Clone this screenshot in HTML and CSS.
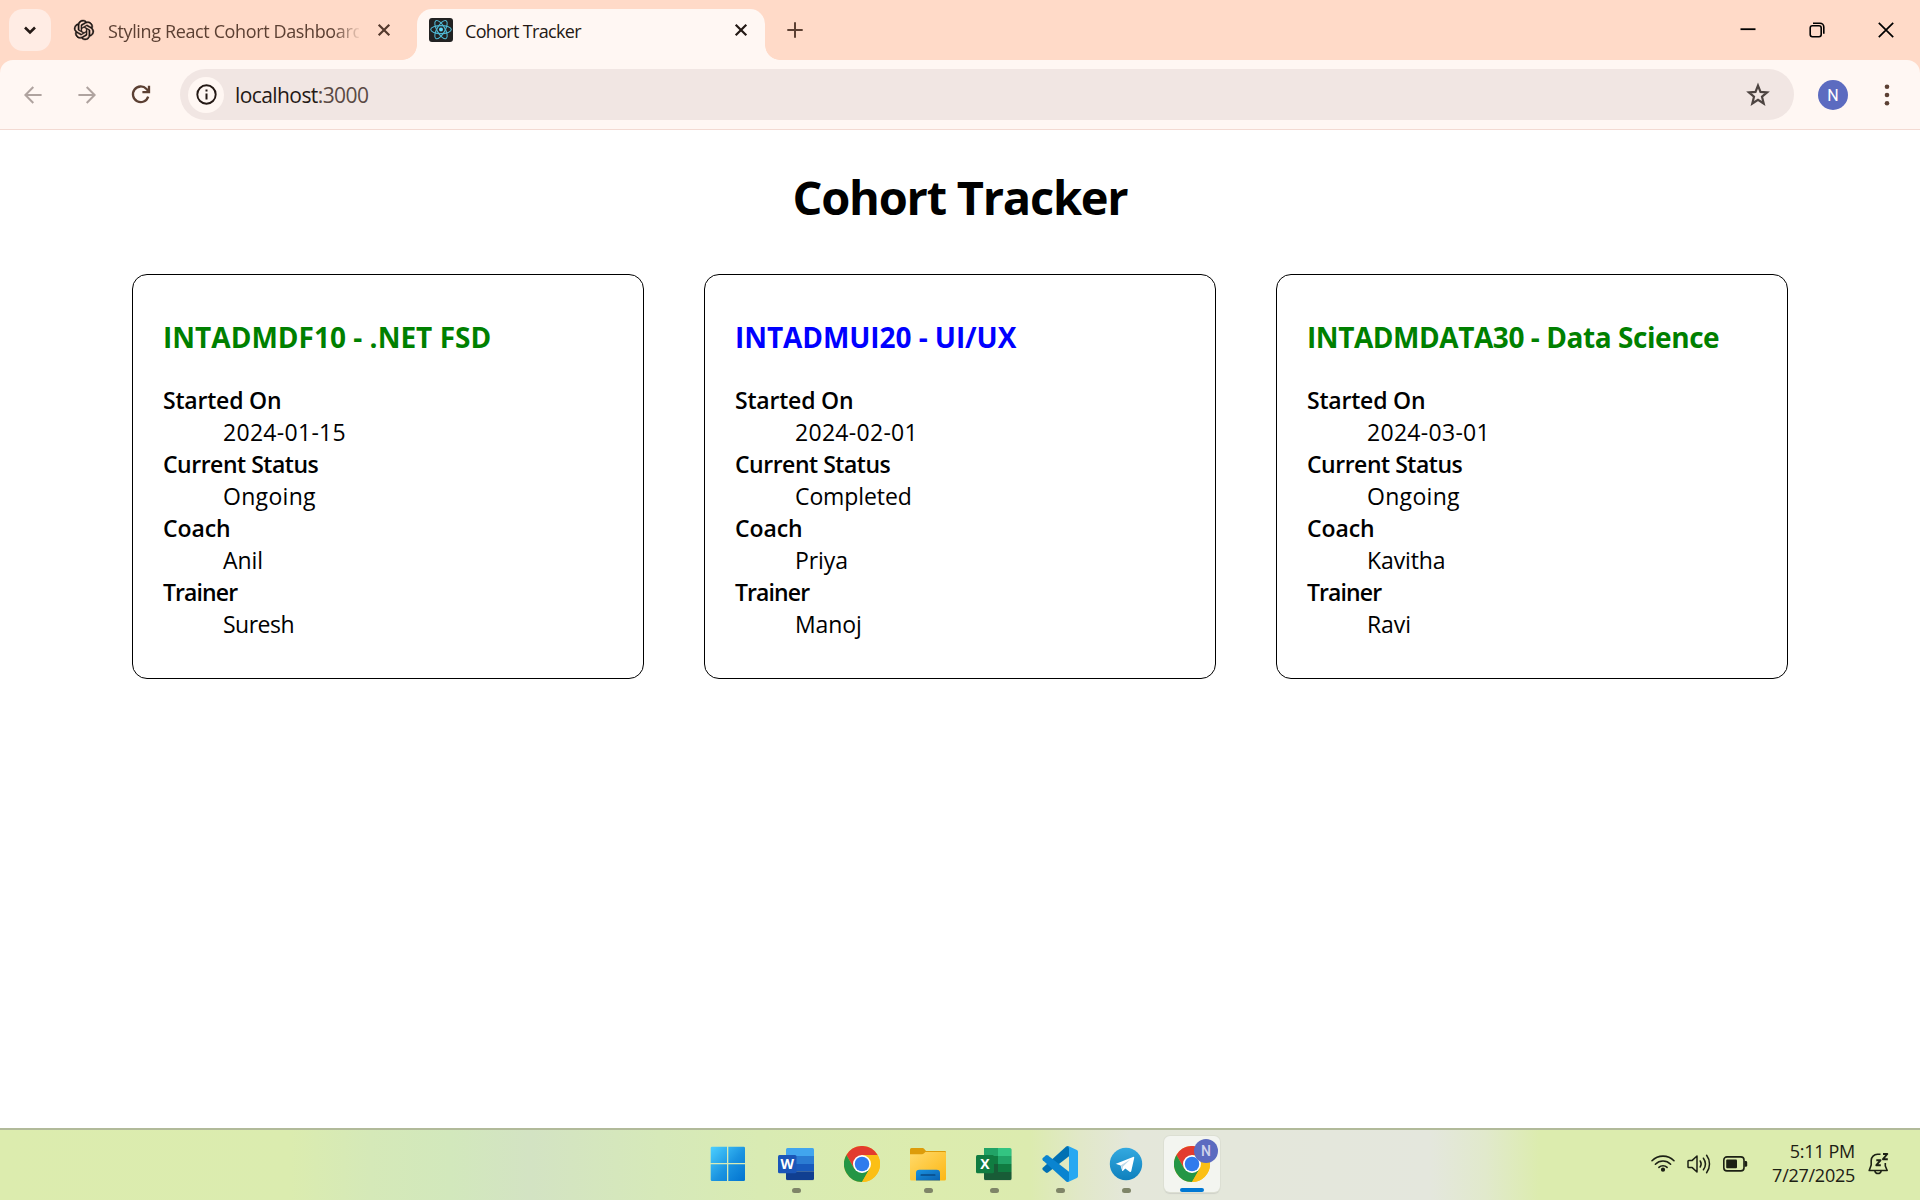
FILE: index.html
```html
<!DOCTYPE html>
<html lang="en">
<head>
<meta charset="utf-8">
<title>Cohort Tracker</title>
<link rel="stylesheet" href="styles.css">
</head>
<body>
<svg class="defs" width="0" height="0" aria-hidden="true">
  <defs>
    <symbol id="chrome" viewBox="0 0 48 48">
      <circle cx="24" cy="24" r="24" fill="#fbbf16"/>
      <path d="M24 12H44.8A24 24 0 0 0 3.2 12L13.6 30z" fill="#e33b2e"/>
      <path d="M3.2 12L13.6 30L24 36L34.4 30L24 48A24 24 0 0 1 3.2 12z" fill="#249645"/>
      <path d="M24 12H44.8A24 24 0 0 1 24 48L34.4 30z" fill="#fbbf16"/>
      <circle cx="24" cy="24" r="12" fill="#fff"/>
      <circle cx="24" cy="24" r="9.7" fill="#2f7bed"/>
    </symbol>
    <linearGradient id="winFill" x1="0" y1="0" x2="1" y2="1"><stop offset="0" stop-color="#4cd0ff"/><stop offset=".55" stop-color="#1a93e0"/><stop offset="1" stop-color="#0273d0"/></linearGradient>
    <linearGradient id="folderFill" x1="0" y1="0" x2="1" y2="1"><stop offset="0" stop-color="#ffda6b"/><stop offset="1" stop-color="#fcb714"/></linearGradient>
    <linearGradient id="tgFill" x1="0" y1="0" x2="0" y2="1"><stop offset="0" stop-color="#33a9e0"/><stop offset="1" stop-color="#0f80bd"/></linearGradient>
    <linearGradient id="trayFill" x1="0" y1="0" x2="1" y2="1"><stop offset="0" stop-color="#1a93e2"/><stop offset="1" stop-color="#0a62b0"/></linearGradient>
  </defs>
</svg>

<header class="tabstrip">
  <button class="tab-search" aria-label="Search tabs">
    <svg width="14" height="14" viewBox="0 0 14 14"><path d="M2 4.5l5 5 5-5" fill="none" stroke="#241915" stroke-width="2.6"/></svg>
  </button>
  <div class="tab">
    <svg class="tab-icon-ai" width="20" height="20" viewBox="0 0 24 24"><path fill="#1b1412" stroke="#1b1412" stroke-width=".5" d="M22.2819 9.8211a5.9847 5.9847 0 0 0-.5157-4.9108 6.0462 6.0462 0 0 0-6.5098-2.9A6.0651 6.0651 0 0 0 4.9807 4.1818a5.9847 5.9847 0 0 0-3.9977 2.9 6.0462 6.0462 0 0 0 .7427 7.0966 5.98 5.98 0 0 0 .511 4.9107 6.051 6.051 0 0 0 6.5146 2.9001A5.9847 5.9847 0 0 0 13.2599 24a6.0557 6.0557 0 0 0 5.7718-4.2058 5.9894 5.9894 0 0 0 3.9977-2.9001 6.0557 6.0557 0 0 0-.7475-7.0729zm-9.022 12.6081a4.4755 4.4755 0 0 1-2.8764-1.0408l.1419-.0804 4.7783-2.7582a.7948.7948 0 0 0 .3927-.6813v-6.7369l2.02 1.1686a.071.071 0 0 1 .038.052v5.5826a4.504 4.504 0 0 1-4.4945 4.4944zm-9.6607-4.1254a4.4708 4.4708 0 0 1-.5346-3.0137l.142.0852 4.783 2.7582a.7712.7712 0 0 0 .7806 0l5.8428-3.3685v2.3324a.0804.0804 0 0 1-.0332.0615L9.74 19.9502a4.4992 4.4992 0 0 1-6.1408-1.6464zM2.3408 7.8956a4.485 4.485 0 0 1 2.3655-1.9728V11.6a.7664.7664 0 0 0 .3879.6765l5.8144 3.3543-2.0201 1.1685a.0757.0757 0 0 1-.071 0l-4.8303-2.7865A4.504 4.504 0 0 1 2.3408 7.872zm16.5963 3.8558L13.1038 8.364 15.1192 7.2a.0757.0757 0 0 1 .071 0l4.8303 2.7913a4.4944 4.4944 0 0 1-.6765 8.1042v-5.6772a.79.79 0 0 0-.407-.667zm2.0107-3.0231l-.142-.0852-4.7735-2.7818a.7759.7759 0 0 0-.7854 0L9.409 9.2297V6.8974a.0662.0662 0 0 1 .0284-.0615l4.8303-2.7866a4.4992 4.4992 0 0 1 6.6802 4.66zM8.3065 12.863l-2.02-1.1638a.0804.0804 0 0 1-.038-.0567V6.0742a4.4992 4.4992 0 0 1 7.3757-3.4537l-.142.0805L8.704 5.459a.7948.7948 0 0 0-.3927.6813zm1.0976-2.3654l2.602-1.4998 2.6069 1.4998v2.9994l-2.5974 1.4997-2.6067-1.4997Z"/></svg>
    <span class="tab-title faded">Styling React Cohort Dashboard</span>
    <svg class="tab-close" width="14" height="14" viewBox="0 0 14 14"><path d="M1.7 1.7l10.6 10.6M12.3 1.7L1.7 12.3" stroke="#54392d" stroke-width="2.2"/></svg>
  </div>
  <div class="tab active">
    <svg width="24" height="24" viewBox="0 0 24 24"><rect width="24" height="24" rx="3" fill="#222"/><g fill="none" stroke="#4fb8d3" stroke-width="1.1"><ellipse cx="12" cy="11.6" rx="10.3" ry="4"/><ellipse cx="12" cy="11.6" rx="10.3" ry="4" transform="rotate(60 12 11.6)"/><ellipse cx="12" cy="11.6" rx="10.3" ry="4" transform="rotate(120 12 11.6)"/></g><circle cx="12" cy="11.6" r="2" fill="#61dafb"/></svg>
    <span class="tab-title">Cohort Tracker</span>
    <svg class="tab-close" width="14" height="14" viewBox="0 0 14 14"><path d="M1.7 1.7l10.6 10.6M12.3 1.7L1.7 12.3" stroke="#241915" stroke-width="2.2"/></svg>
  </div>
  <svg class="new-tab" width="16" height="16" viewBox="0 0 16 16"><path d="M8 .3v15.4M.3 8h15.4" stroke="#5c4033" stroke-width="2"/></svg>
  <div class="window-controls">
    <svg width="16" height="16" viewBox="0 0 16 16"><path d="M.5 7.2h15" stroke="#000" stroke-width="1.8"/></svg>
    <svg width="16" height="16" viewBox="0 0 16 16" fill="none" stroke="#000" stroke-width="1.6"><rect x="1.2" y="3.8" width="11" height="11" rx="2.2"/><path d="M4 1.3h7a3.8 3.8 0 0 1 3.8 3.8v6.6"/></svg>
    <svg width="16" height="16" viewBox="0 0 16 16"><path d="M.8.8l14.4 14.4M15.2.8L.8 15.2" stroke="#000" stroke-width="1.7"/></svg>
  </div>
</header>

<div class="toolbar-wrap">
  <nav class="toolbar">
    <svg class="nav-icon" width="18" height="18" viewBox="0 0 18 18" fill="none" stroke="#afa39f" stroke-width="2"><path d="M17.6 9H1.6M9.3 1L1.4 9l7.9 8"/></svg>
    <svg class="nav-icon" width="18" height="18" viewBox="0 0 18 18" fill="none" stroke="#afa39f" stroke-width="2"><path d="M.4 9h16M8.7 1l7.9 8-7.9 8"/></svg>
    <svg class="nav-icon" width="19" height="19" viewBox="0 0 19 19" fill="none" stroke="#5c4033" stroke-width="2.3"><path d="M16.2 11.6A7.8 7.8 0 1 1 14.500 4l2 2.200"/><path d="M17 .8v6.300h-6.600"/></svg>
    <div class="omnibox">
      <span class="site-info">
        <svg width="21" height="21" viewBox="0 0 21 21"><circle cx="10.5" cy="10.5" r="9.2" fill="none" stroke="#241915" stroke-width="1.9"/><path d="M10.5 9.4v6.2M10.5 5.5v2.1" stroke="#241915" stroke-width="2"/></svg>
      </span>
      <span class="url">localhost<span class="port">:3000</span></span>
      <svg class="star" width="24" height="24" viewBox="0 0 24 24"><path d="M12 2.6l2.5 6.3 6.6.5-5.1 4.3 1.7 6.8L12 16.8l-5.7 3.7L8 13.7 2.9 9.4l6.6-.5z" fill="none" stroke="#4d4441" stroke-width="2.2"/></svg>
    </div>
    <span class="avatar">N</span>
    <svg class="menu-dots" width="6" height="24" viewBox="0 0 6 24" fill="#5c4033"><circle cx="3" cy="3.7" r="2.3"/><circle cx="3" cy="12" r="2.3"/><circle cx="3" cy="20.3" r="2.3"/></svg>
  </nav>
</div>

<main class="page">
  <h1>Cohort Tracker</h1>
  <section class="cards">
    <article class="card ongoing">
      <h2 class="title-net">INTADMDF10 - .NET FSD</h2>
      <dl>
        <dt>Started On</dt><dd class="wide">2024-01-15</dd>
        <dt class="status">Current Status</dt><dd class="wide">Ongoing</dd>
        <dt class="coach">Coach</dt><dd>Anil</dd>
        <dt class="trainer">Trainer</dt><dd class="tight">Suresh</dd>
      </dl>
    </article>
    <article class="card completed">
      <h2 class="title-ui">INTADMUI20 - UI/UX</h2>
      <dl>
        <dt>Started On</dt><dd class="wide">2024-02-01</dd>
        <dt class="status">Current Status</dt><dd>Completed</dd>
        <dt class="coach">Coach</dt><dd>Priya</dd>
        <dt class="trainer">Trainer</dt><dd>Manoj</dd>
      </dl>
    </article>
    <article class="card ongoing">
      <h2 class="title-data">INTADMDATA30 - Data Science</h2>
      <dl>
        <dt>Started On</dt><dd class="wide">2024-03-01</dd>
        <dt class="status">Current Status</dt><dd class="wide">Ongoing</dd>
        <dt class="coach">Coach</dt><dd>Kavitha</dd>
        <dt class="trainer">Trainer</dt><dd>Ravi</dd>
      </dl>
    </article>
  </section>
</main>

<footer class="taskbar">
  <div class="side"></div>
  <div class="apps">
    <div class="app start">
      <svg width="36" height="36" viewBox="0 0 36 36"><path fill="url(#winFill)" d="M2 .7h15v16.3H.7V2A1.3 1.3 0 0 1 2 .7zM18.3.7h15.4A1.3 1.3 0 0 1 35 2v15H18.3zM.7 18.3H17V35H2a1.3 1.3 0 0 1-1.3-1.3zM18.3 18.3H35v15.4a1.3 1.3 0 0 1-1.3 1.3H18.3z"/></svg>
    </div>
    <div class="app running">
      <svg width="36" height="36" viewBox="0 0 36 36"><rect x="8" y="3" width="28" height="31.5" rx="1.5" fill="#777" opacity=".35"/><path d="M9.500 2h25A1.500 1.500 0 0 1 36 3.500V10H8V3.500A1.500 1.500 0 0 1 9.500 2z" fill="#41a5ee"/><path d="M8 10h28v8H8z" fill="#2b7cd3"/><path d="M8 18h28v7.500H8z" fill="#185abd"/><path d="M8 25.500h28v7A1.500 1.500 0 0 1 34.500 34h-25A1.500 1.500 0 0 1 8 32.500z" fill="#103f91"/><rect y="9" width="18.500" height="18.300" rx="1.500" fill="#1a56b8"/><text x="9.200" y="23.200" class="glyph word">W</text></svg>
    </div>
    <div class="app"><svg width="36" height="36"><use href="#chrome"/></svg></div>
    <div class="app running">
      <svg width="36" height="36" viewBox="0 0 36 36"><path d="M1.500 2H12.500q1 0 1.600.7L16 5H35a1 1 0 0 1 1 1v5H0V3.500A1.500 1.500 0 0 1 1.500 2z" fill="#dd9c0a"/><path d="M0 8.200h12q1 0 1.800-.8l1.600-1.500H35a1 1 0 0 1 1 1V33a1.500 1.500 0 0 1-1.500 1.500h-33A1.500 1.500 0 0 1 0 33z" fill="url(#folderFill)"/><path d="M6 34.500V27a3.300 3.300 0 0 1 3.300-3.300h17.400A3.300 3.300 0 0 1 30 27v7.500z" fill="url(#trayFill)"/><path d="M11.300 29h13.400" stroke="#084a85" stroke-width="1.700" stroke-linecap="round"/></svg>
    </div>
    <div class="app running">
      <svg width="36" height="36" viewBox="0 0 36 36"><rect x="8" y="3" width="27.500" height="31.500" rx="1.500" fill="#777" opacity=".35"/><path d="M8 2h14v8H8z" fill="#21a366"/><path d="M22 2h12A1.500 1.500 0 0 1 35.500 3.500V10H22z" fill="#33c481"/><path d="M8 10h14v8H8z" fill="#107c41"/><path d="M22 10h13.500v8H22z" fill="#21a366"/><path d="M22 18h13.500v8H22z" fill="#107c41"/><path d="M8 18h14v8h13.500v6.500A1.500 1.500 0 0 1 34 34H9.500A1.500 1.500 0 0 1 8 32.500z" fill="#185c37"/><rect y="9" width="18" height="18.300" rx="1.500" fill="#107c41"/><text x="9" y="23.200" class="glyph">X</text></svg>
    </div>
    <div class="app running">
      <svg width="36" height="36" viewBox="0 0 36 36"><path d="M27 .4V10.200L6 26.500q-1.200.8-2.200 0L.8 23.900q-1.100-1.100 0-2.200L24.200.6Q25.700-.3 27 .4z" fill="#0070b3"/><path d="M27 35.600V25.800L6 9.500q-1.200-.8-2.200 0L.8 12.100q-1.100 1.100 0 2.200l23.400 21.100q1.500.9 2.800.2z" fill="#0a84d0"/><path d="M26.500.3q0-.3.800.1l7.600 3.500Q36 4.500 36 5.700v24.600q0 1.200-1.100 1.800l-7.600 3.500q-1.300.4-2.400-.5 2.100.4 2.100-1.500V2.400q0-1.900-2.100-1.500z" fill="#27a8f2"/></svg>
    </div>
    <div class="app running">
      <svg width="36" height="36" viewBox="0 0 36 36"><circle cx="18" cy="18" r="16.200" fill="url(#tgFill)"/><path d="M8 17.700L25 10.900q1.500-.4 1.200 1.200L23.300 25q-.4 1.500-1.700.7l-4.300-3.200-2.200 2.200q-.7.600-1-.3l-1.500-4.900-4.400-1.400q-1-.3-.2-.4z" fill="#fff"/><path d="M12.900 19.300l9.600-6-7.500 7.300-.7 3.600z" fill="#bcd9ea"/></svg>
    </div>
    <div class="app current">
      <svg width="36" height="36"><use href="#chrome"/></svg>
      <span class="profile-badge">N</span>
    </div>
  </div>
  <div class="tray">
    <svg class="wifi" width="24" height="18" viewBox="0 0 24 18" fill="none" stroke="#1c2014" stroke-width="1.600" stroke-linecap="round"><path d="M1 6.700a15.600 15.600 0 0 1 22 0M4.400 10.200a10.800 10.800 0 0 1 15.200 0M7.900 13.400a5.900 5.900 0 0 1 8.200 0"/><circle cx="12" cy="15.700" r="1.300" fill="#1c2014"/></svg>
    <svg class="speaker" width="25" height="22" viewBox="0 0 25 22" fill="none" stroke="#1c2014" stroke-width="1.500" stroke-linejoin="round" stroke-linecap="round"><path d="M1 8.200q0-.8.800-.8h3.400L10 3v16l-4.800-4.400H1.800q-.8 0-.8-.8z"/><path d="M13.200 8a5.500 5.500 0 0 1 0 6M16.400 5.200a10 10 0 0 1 0 11.600M19.600 2.300a14.500 14.500 0 0 1 0 17.400"/></svg>
    <svg class="battery" width="25" height="16" viewBox="0 0 25 16"><rect x=".8" y=".9" width="20.200" height="14" rx="3.200" fill="none" stroke="#1c2014" stroke-width="1.600"/><rect x="3.200" y="3.500" width="10.800" height="8.800" rx="1" fill="#1c2014"/><path d="M21.500 5h1.300q1.400 0 1.400 1.400v3q0 1.400-1.400 1.400h-1.300z" fill="#1c2014"/></svg>
    <div class="clock"><span class="time">5:11 PM</span><span class="date">7/27/2025</span></div>
    <svg class="bell" width="22" height="24" viewBox="0 0 22 24" fill="none" stroke="#1c2014" stroke-width="1.600" stroke-linejoin="round"><path d="M12.500 2.300H9.500A6.300 6.300 0 0 0 3.200 8.600V13L1.200 18.500H19.200L17.300 14V11"/><path d="M6.800 19a3.300 3.300 0 0 0 6.400 0"/><path d="M8.300 8.300h4.200l-4.200 4.900h4.500M15 2h4.300L15 7.200h4.800" stroke-width="1.900"/></svg>
  </div>
</footer>
</body>
</html>
```

FILE: styles.css
```css
* { box-sizing: border-box; }

body {
  margin: 0;
  width: 1920px;
  height: 1200px;
  display: flex;
  flex-direction: column;
  overflow: hidden;
  background: #fff;
  color: #000;
  font-family: "Open Sans", "Noto Sans", sans-serif;
}

svg { display: block; flex: none; overflow: visible; }
.defs { position: absolute; }

/* Tab strip */
.tabstrip {
  height: 60px;
  flex: none;
  display: flex;
  align-items: flex-start;
  padding: 9px 26px 0 9px;
  background: #ffdac8;
}

.tab-search {
  width: 42px;
  height: 42px;
  padding: 0;
  border: 0;
  border-radius: 14px;
  display: grid;
  place-items: center;
  background: #ffece4;
}

.tab {
  height: 51px;
  width: 343px;
  margin-left: 23px;
  display: flex;
  align-items: flex-start;
  font-size: 18px;
  color: #5c4033;
}

.tab-icon-ai { margin-top: 11px; }

.tab-title {
  margin-left: 14px;
  width: 251px;
  line-height: 24px;
  padding-top: 10px;
  white-space: nowrap;
  overflow: hidden;
  letter-spacing: -0.37px;
}

/* Long titles fade out before the close button */
.faded {
  -webkit-mask-image: linear-gradient(to right, #000 225px, transparent 254px);
  mask-image: linear-gradient(to right, #000 225px, transparent 254px);
}

.tab-close { margin: 14px 0 0 18px; }

.tab.active {
  position: relative;
  width: 348px;
  margin-left: 0;
  padding: 0 17px 0 12px;
  border-radius: 15px 15px 0 0;
  background: #fff7f3;
  color: #241915;
}

.tab.active > svg:first-child { margin-top: 9px; }
.tab.active .tab-title { margin-left: 12px; flex: 1; letter-spacing: -0.67px; }

/* Curved feet of the selected tab */
.tab.active::before,
.tab.active::after {
  content: "";
  position: absolute;
  bottom: 0;
  width: 15px;
  height: 15px;
}
.tab.active::before { left: -15px; background: radial-gradient(circle at 0 0, transparent 14.5px, #fff7f3 15.2px); }
.tab.active::after { right: -15px; background: radial-gradient(circle at 100% 0, transparent 14.5px, #fff7f3 15.2px); }

.new-tab { margin: 13px 0 0 22px; }

.window-controls {
  margin: 13px 0 0 auto;
  display: flex;
  gap: 53px;
}

/* Toolbar */
.toolbar-wrap { flex: none; background: #ffdac8; }

.toolbar {
  height: 70px;
  display: flex;
  align-items: center;
  padding: 0 30px 0 24px;
  border-radius: 13px 13px 0 0;
  border-bottom: 1px solid #f3dad2;
  background: #fff7f3;
}

.nav-icon + .nav-icon { margin-left: 36px; }

.omnibox {
  height: 51px;
  width: 1614px;
  margin-left: 29px;
  padding: 0 24px 0 8px;
  display: flex;
  align-items: center;
  border-radius: 26px;
  background: #f1e6e3;
}

.site-info {
  width: 36px;
  height: 36px;
  border-radius: 50%;
  display: grid;
  place-items: center;
  background: #fff7f3;
}

.url { margin-left: 11px; font-size: 21px; line-height: 30px; letter-spacing: -0.58px; color: #241915; }
.port { color: #5a4a44; }
.star { margin-left: auto; }

.avatar {
  width: 30px;
  height: 30px;
  margin-left: 24px;
  border-radius: 50%;
  background: #5c6bc0;
  color: #fff;
  font: 16px/31px Roboto, sans-serif;
  text-align: center;
}

.menu-dots { margin-left: 36px; }

/* Page */
.page {
  flex: 1;
  padding: 35px 132px 0;
}

h1 {
  margin: 0 0 45px;
  font-size: 47px;
  line-height: 64px;
  letter-spacing: -1.25px;
  text-align: center;
}

.cards {
  display: grid;
  grid-template-columns: repeat(3, 512px);
  justify-content: space-between;
}

.card {
  height: 405px;
  padding: 44px 30px 0;
  border: 1px solid #000;
  border-radius: 15px;
}

h2 {
  margin: 0 0 28px;
  font-size: 28px;
  line-height: 37px;
  white-space: nowrap;
}

.title-net { letter-spacing: 0.02px; }
.title-ui { letter-spacing: -0.07px; }
.title-data { letter-spacing: -0.44px; }
.ongoing h2 { color: #008000; }
.completed h2 { color: #0000ff; }

dl { margin: 0; font-size: 23px; line-height: 32px; }
dt { font-weight: 600; letter-spacing: -0.2px; }
dd { margin: 0 0 0 60px; letter-spacing: -0.1px; }
.status { letter-spacing: -0.48px; }
.coach { letter-spacing: -0.1px; }
.trainer { letter-spacing: -0.9px; }
.wide { letter-spacing: 0.3px; }
.tight { letter-spacing: -0.5px; }

/* Taskbar */
.taskbar {
  height: 72px;
  flex: none;
  display: grid;
  grid-template-columns: 697px 528px 1fr;
  border-top: 2px solid #b1ba9a;
  background: linear-gradient(to right, #dcecae 0, #dbecaf 290px, #d5e9b8 370px, #d2e8bc 450px, #d3e3c3 530px, #d6e9b9 660px, #d9ebb3 760px, #dcecae 930px, #dcebaf 1030px, #e1e8c8 1080px, #e4e7da 1130px, #e4e7dd 1430px, #e1e9cc 1485px, #dcecae 1540px);
}

.apps { display: flex; padding-top: 6px; }

.app {
  position: relative;
  width: 66px;
  display: flex;
  flex-direction: column;
  align-items: center;
  padding-top: 10px;
  height: 64px;
}

.app.start { padding-right: 4px; }

.running::after,
.current::after {
  content: "";
  width: 9px;
  height: 5px;
  margin-top: 6px;
  border-radius: 3px;
  background: #7f8568;
}

.app.current {
  width: 56px;
  height: 56px;
  margin-left: 5px;
  border-radius: 6px;
  background: #f3f5f0;
  box-shadow: 0 0 0 1px #dcdfd3, 0 2px 1px #cfd1c8;
}
.current::after { width: 24px; background: #0078d4; }

.glyph { font: bold 14px "Open Sans", sans-serif; fill: #fff; text-anchor: middle; }
.word { font-size: 14px; }

.profile-badge {
  position: absolute;
  top: 3px;
  right: 2px;
  width: 24px;
  height: 24px;
  border-radius: 50%;
  background: #5c6bc0;
  color: #d0d4ec;
  font: 500 14px/25px Roboto, sans-serif;
  text-align: center;
}

.tray {
  display: flex;
  align-items: flex-start;
  justify-content: flex-end;
  padding-right: 30px;
  color: #1c2014;
}

.wifi { margin-top: 24px; }
.speaker { margin: 23px 0 0 12px; }
.battery { margin: 26px 0 0 11px; }

.clock {
  width: 90px;
  margin: 9px 0 0 17px;
  display: flex;
  flex-direction: column;
  text-align: right;
  font-size: 18px;
  line-height: 24px;
}
.time { letter-spacing: -0.3px; }
.date { letter-spacing: -0.26px; }
.bell { margin: 22px 0 0 13px; }
```
